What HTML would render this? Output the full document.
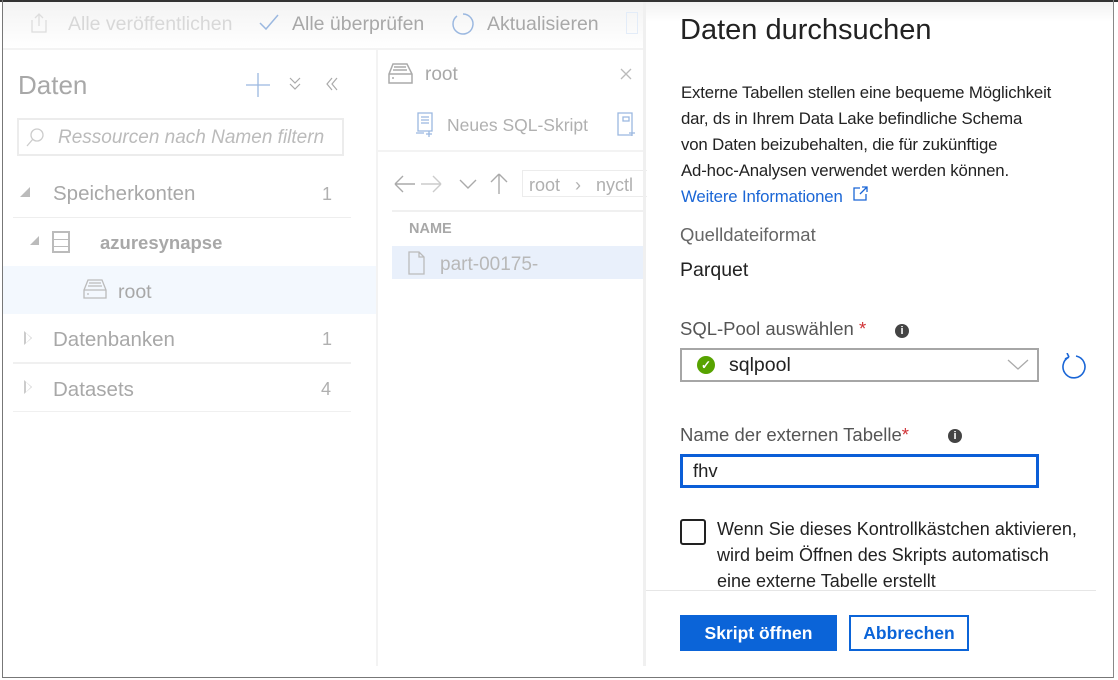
<!DOCTYPE html>
<html><head><meta charset="utf-8"><style>
*{margin:0;padding:0;box-sizing:border-box}
body{width:1118px;height:680px;overflow:hidden;background:#fff;font-family:"Liberation Sans",sans-serif;position:relative}
.a{position:absolute;white-space:nowrap}
</style></head><body>
<div class="a" style="left:0;top:0;width:1118px;height:2px;background:#333"></div>
<div class="a" style="left:2px;top:0;width:1px;height:678px;background:#777"></div>
<div class="a" style="left:2px;top:677px;width:1112px;height:1px;background:#777"></div>
<div class="a" style="left:1113px;top:0;width:1px;height:678px;background:#888"></div>
<!-- toolbar -->
<div class="a" style="left:3px;top:2px;width:640px;height:46px;background:linear-gradient(#f3f3f3,#fff)"></div>
<div class="a" style="left:3px;top:48px;width:640px;height:2px;background:#f3f3f3"></div>
<svg class="a" style="left:28px;top:12px" width="22" height="22"><path d="M4 8v12h14V8M11 2v12M7 6l4-4 4 4" fill="none" stroke="#ddd" stroke-width="1.3"/></svg>
<div class="a" style="left:68px;top:13px;font-size:19.5px;color:#d8d8d8">Alle veröffentlichen</div>
<svg class="a" style="left:258px;top:13px" width="22" height="20"><path d="M2 10l6 6L20 2" fill="none" stroke="#9bb8e0" stroke-width="1.5"/></svg>
<div class="a" style="left:292px;top:13px;font-size:19.5px;color:#a8a8a8">Alle überprüfen</div>
<svg class="a" style="left:449px;top:11px" width="26" height="26"><path d="M8 5A10 10 0 1 0 14 3" fill="none" stroke="#9bb8e0" stroke-width="1.5"/></svg>
<div class="a" style="left:487px;top:13px;font-size:19.5px;color:#a8a8a8">Aktualisieren</div>
<div class="a" style="left:626px;top:12px;width:12px;height:22px;border:1px solid #e3ecf8"></div>
<!-- left pane -->
<div class="a" style="left:18px;top:70px;font-size:26px;color:#a8a8a8">Daten</div>
<svg class="a" style="left:245px;top:72px" width="26" height="26"><path d="M13 1v24M1 13h24" stroke="#9bb8e0" stroke-width="1.3"/></svg>
<svg class="a" style="left:288px;top:76px" width="14" height="16"><path d="M2 2l5 5 5-5M2 8l5 5 5-5" fill="none" stroke="#aaa" stroke-width="1.2"/></svg>
<svg class="a" style="left:324px;top:76px" width="16" height="16"><path d="M8 2L3 8l5 6M13 2L8 8l5 6" fill="none" stroke="#aaa" stroke-width="1.2"/></svg>
<div class="a" style="left:17px;top:118px;width:327px;height:38px;border:2px solid #ececec"></div>
<svg class="a" style="left:24px;top:127px" width="22" height="22"><circle cx="13" cy="8" r="6" fill="none" stroke="#ccc" stroke-width="1.3"/><path d="M9 12L3 19" stroke="#ccc" stroke-width="1.3"/></svg>
<div class="a" style="left:58px;top:127px;font-size:19px;color:#bbb;font-style:italic">Ressourcen nach Namen filtern</div>
<div class="a" style="left:20px;top:187px;width:0;height:0;border-left:10px solid transparent;border-bottom:10px solid #bbb"></div>
<div class="a" style="left:53px;top:182px;font-size:20.5px;color:#a8a8a8">Speicherkonten</div>
<div class="a" style="left:322px;top:184px;font-size:18px;color:#b0b0b0">1</div>
<div class="a" style="left:13px;top:217px;width:338px;height:1px;background:#eee"></div>
<div class="a" style="left:30px;top:236px;width:0;height:0;border-left:9px solid transparent;border-bottom:9px solid #bbb"></div>
<div class="a" style="left:52px;top:231px;width:18px;height:22px;border:2px solid #bbb;background:linear-gradient(#fff 6px,#bbb 6px,#bbb 7px,#fff 7px,#fff 13px,#bbb 13px,#bbb 14px,#fff 14px)"></div>
<div class="a" style="left:100px;top:232px;font-size:18.5px;font-weight:bold;color:#a8a8a8">azuresynapse</div>
<div class="a" style="left:3px;top:266px;width:374px;height:48px;background:#f3f8fe"></div>
<svg class="a" style="left:83px;top:279px" width="24" height="20"><path d="M5 1h14l4 10v8H1v-8z M1 11h22 M6 4h12 M5 7h14 M4 15h2" fill="none" stroke="#bbb" stroke-width="1.3"/></svg>
<div class="a" style="left:118px;top:281px;font-size:19.5px;color:#a8a8a8">root</div>
<div class="a" style="left:24px;top:331px;width:0;height:0;border-top:7px solid transparent;border-bottom:7px solid transparent;border-left:8px solid #ccc"></div>
<div class="a" style="left:26px;top:333px;width:0;height:0;border-top:5px solid transparent;border-bottom:5px solid transparent;border-left:5px solid #fff"></div>
<div class="a" style="left:53px;top:328px;font-size:20.5px;color:#a8a8a8">Datenbanken</div>
<div class="a" style="left:322px;top:329px;font-size:18px;color:#b0b0b0">1</div>
<div class="a" style="left:13px;top:362px;width:338px;height:2px;background:#f0f0f0"></div>
<div class="a" style="left:24px;top:380px;width:0;height:0;border-top:7px solid transparent;border-bottom:7px solid transparent;border-left:8px solid #ccc"></div>
<div class="a" style="left:26px;top:382px;width:0;height:0;border-top:5px solid transparent;border-bottom:5px solid transparent;border-left:5px solid #fff"></div>
<div class="a" style="left:53px;top:378px;font-size:20.5px;color:#a8a8a8">Datasets</div>
<div class="a" style="left:321px;top:379px;font-size:18px;color:#b0b0b0">4</div>
<div class="a" style="left:13px;top:411px;width:338px;height:1px;background:#f0f0f0"></div>
<!-- middle -->
<div class="a" style="left:376px;top:50px;width:2px;height:616px;background:#f3f3f3"></div>
<svg class="a" style="left:388px;top:63px" width="26" height="22"><path d="M5 1h14l5 10v9H1v-9z M1 11h23 M6 4h12 M5 7h14 M4 15h2" fill="none" stroke="#aaa" stroke-width="1.5"/></svg>
<div class="a" style="left:425px;top:64px;font-size:19px;color:#a8a8a8">root</div>
<svg class="a" style="left:619px;top:67px" width="14" height="14"><path d="M2 2l10 10M12 2L2 12" stroke="#bbb" stroke-width="1.3"/></svg>
<svg class="a" style="left:414px;top:111px" width="22" height="26"><path d="M4 2h14v18H4z M7 6h8 M7 9h8 M7 12h8 M2 22h8 M15 20v6 M12 23h6" fill="none" stroke="#9bb8e0" stroke-width="1.3"/></svg>
<div class="a" style="left:447px;top:115px;font-size:17.5px;color:#b0b0b0">Neues SQL-Skript</div>
<svg class="a" style="left:614px;top:111px" width="22" height="26"><path d="M4 2h14v22H4z M9 6h6v4H9z M15 22h6 M18 19v6" fill="none" stroke="#9bb8e0" stroke-width="1.3"/></svg>
<div class="a" style="left:378px;top:150px;width:265px;height:2px;background:#f3f3f3"></div>
<svg class="a" style="left:393px;top:172px" width="120" height="24"><g fill="none" stroke-width="1.4"><path d="M2 12h20M2 12l8-8M2 12l8 8" stroke="#aaa"/><path d="M28 12h20M48 12l-8-8M48 12l-8 8" stroke="#ccc"/><path d="M67 8l8 8 8-8" stroke="#aaa"/><path d="M106 2v20M106 2l-8 8M106 2l8 8" stroke="#aaa"/></g></svg>
<div class="a" style="left:522px;top:170px;width:125px;height:27px;border:1px solid #ececec;border-right:none"></div>
<div class="a" style="left:529px;top:175px;font-size:18px;color:#b0b0b0">root &nbsp;&nbsp;›&nbsp;&nbsp; nyctl</div>
<div class="a" style="left:392px;top:210px;width:251px;height:2px;background:#f0f0f0"></div>
<div class="a" style="left:409px;top:221px;font-size:14.5px;font-weight:bold;color:#a8a8a8">NAME</div>
<div class="a" style="left:392px;top:246px;width:251px;height:33px;background:#e9f0fb"></div>
<svg class="a" style="left:408px;top:251px" width="18" height="24"><path d="M1 1h10l5 5v17H1z M11 1v5h5" fill="none" stroke="#bbb" stroke-width="1.3"/></svg>
<div class="a" style="left:440px;top:254px;font-size:19px;color:#b8b8b8">part-00175-</div>
<!-- right panel -->
<div class="a" style="left:643px;top:2px;width:3px;height:664px;background:#f0f0f0"></div>
<div class="a" style="left:646px;top:2px;width:467px;height:20px;background:linear-gradient(#f2f2f2,#fff)"></div>
<div class="a" style="left:680px;top:14px;font-size:29px;color:#222">Daten durchsuchen</div>
<div class="a" style="left:681px;top:80px;font-size:16.8px;line-height:26px;color:#222;letter-spacing:-0.15px">Externe Tabellen stellen eine bequeme Möglichkeit<br>dar, ds in Ihrem Data Lake befindliche Schema<br>von Daten beizubehalten, die für zukünftige<br>Ad-hoc-Analysen verwendet werden können.<br><span style="color:#1a66d6">Weitere Informationen</span></div>
<svg class="a" style="left:853px;top:186px" width="15" height="15"><path d="M7 2H1v12h12V8 M9 1h5v5 M14 1L7 8" fill="none" stroke="#1a66d6" stroke-width="1.3"/></svg>
<div class="a" style="left:680px;top:224px;font-size:18.5px;color:#666">Quelldateiformat</div>
<div class="a" style="left:680px;top:259px;font-size:19.5px;color:#222">Parquet</div>
<div class="a" style="left:680px;top:318px;font-size:18.5px;color:#555">SQL-Pool auswählen <span style="color:#d13438">*</span></div>
<div class="a" style="left:895px;top:324px;width:14px;height:14px;border-radius:50%;background:#444;color:#fff;font-size:11px;font-weight:bold;text-align:center;line-height:14px">i</div>
<div class="a" style="left:680px;top:348px;width:359px;height:34px;border:2px solid #a6a6a6"></div>
<div class="a" style="left:697px;top:356px;width:18px;height:18px;border-radius:50%;background:#57a300;color:#fff;font-size:12px;font-weight:bold;text-align:center;line-height:18px">✓</div>
<div class="a" style="left:729px;top:354px;font-size:19.5px;color:#222">sqlpool</div>
<svg class="a" style="left:1007px;top:358px" width="22" height="14"><path d="M1 2l10 9 10-9" fill="none" stroke="#aaa" stroke-width="1.3"/></svg>
<svg class="a" style="left:1060px;top:353px" width="28" height="28"><path d="M9 4A11 11 0 1 0 16 3 M9 4l-2-4 M9 4l-4 2" fill="none" stroke="#1a66d6" stroke-width="1.6"/></svg>
<div class="a" style="left:680px;top:424px;font-size:18.5px;color:#555">Name der externen Tabelle<span style="color:#d13438">*</span></div>
<div class="a" style="left:948px;top:429px;width:14px;height:14px;border-radius:50%;background:#444;color:#fff;font-size:11px;font-weight:bold;text-align:center;line-height:14px">i</div>
<div class="a" style="left:680px;top:454px;width:359px;height:34px;border:3px solid #0b5ed7"></div>
<div class="a" style="left:693px;top:460px;font-size:18.5px;color:#222">fhv</div>
<div class="a" style="left:680px;top:519px;width:26px;height:26px;border:2px solid #222;border-radius:3px"></div>
<div class="a" style="left:717px;top:516px;font-size:18px;line-height:26px;color:#222">Wenn Sie dieses Kontrollkästchen aktivieren,<br>wird beim Öffnen des Skripts automatisch<br>eine externe Tabelle erstellt</div>
<div class="a" style="left:646px;top:590px;width:450px;height:1px;background:#e6e6e6"></div>
<div class="a" style="left:680px;top:615px;width:157px;height:36px;background:#0b64d8;color:#fff;font-size:17.5px;font-weight:bold;text-align:center;line-height:36px">Skript öffnen</div>
<div class="a" style="left:849px;top:615px;width:120px;height:36px;border:2px solid #0b64d8;color:#0b64d8;font-size:17.5px;font-weight:bold;text-align:center;line-height:32px">Abbrechen</div>
</body></html>
